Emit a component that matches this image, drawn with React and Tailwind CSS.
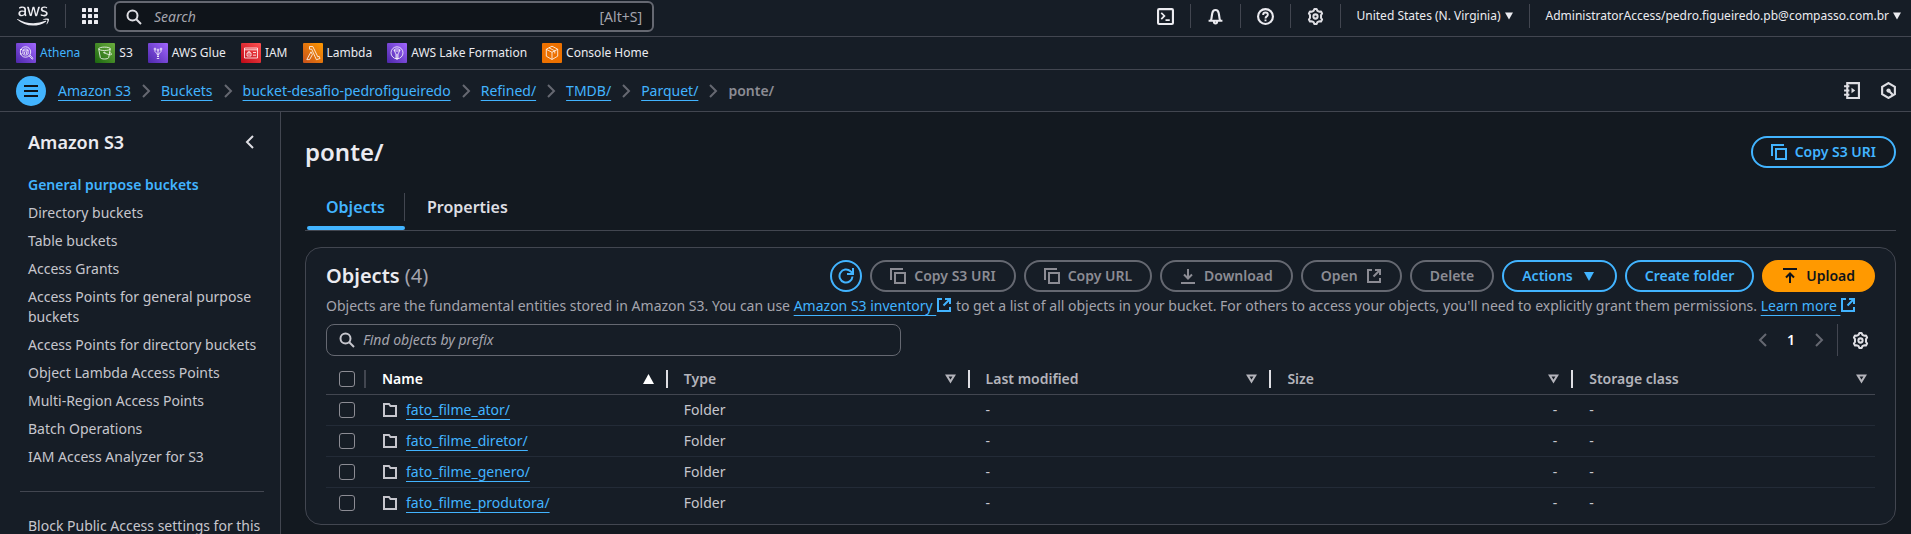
import { FaAws } from "react-icons/fa";

function Icon({ children, className = "size-4", width = 2 }) {
  return (
    <svg viewBox="0 0 16 16" className={"shrink-0 " + className} fill="none" stroke="currentColor" strokeWidth={width} aria-hidden="true">
      {children}
    </svg>
  );
}

const SearchIcon = ({ className }) => (
  <Icon className={className}>
    <circle cx="6.5" cy="6.5" r="5" />
    <path d="M10 10l5 5" />
  </Icon>
);
const GearIcon = () => (
  <Icon className="size-[17px] text-[#dedee3]" width={1.9}>
    <path
      strokeLinejoin="round"
      d="M6.2 2.6 7 1h2l.8 1.6 1.6.9 1.8-.1 1 1.8-1 1.5v2.6l1 1.5-1 1.8-1.8-.1-1.6.9L9 15H7l-.8-1.6-1.6-.9-1.8.1-1-1.8 1-1.5V6.7l-1-1.5 1-1.8 1.8.1z"
    />
    <circle cx="8" cy="8" r="2" />
  </Icon>
);
const CopyIcon = () => (
  <Icon>
    <path d="M5 5h10v10H5z" />
    <path d="M1 12V1h12" />
  </Icon>
);
const ExternalIcon = ({ className }) => (
  <Icon className={className}>
    <path d="M6 2H2v12h12v-4" />
    <path d="M9 2h5v5M14 2L7.500 8.500" />
  </Icon>
);
const ChevronRight = ({ className = "size-4 text-[#656871]" }) => (
  <Icon className={className}>
    <path d="M5 2l6 6-6 6" />
  </Icon>
);
const ChevronLeft = ({ className }) => (
  <Icon className={className}>
    <path d="M11 2L5 8l6 6" />
  </Icon>
);
const CaretDown = ({ className }) => (
  <svg viewBox="0 0 10 9" className={"shrink-0 " + className} fill="currentColor" aria-hidden="true">
    <path d="M0 0h10L5 9z" />
  </svg>
);

function ServiceIcon({ id, from, to, children }) {
  return (
    <svg viewBox="0 0 20 20" className="size-5 shrink-0" aria-hidden="true">
      <defs>
        <linearGradient id={id} x1="0" y1="1" x2="1" y2="0">
          <stop offset="0" stopColor={from} />
          <stop offset="1" stopColor={to} />
        </linearGradient>
      </defs>
      <rect width="20" height="20" rx="1" fill={"url(#" + id + ")"} />
      <g fill="none" stroke="#fff" strokeWidth="0.8">
        {children}
      </g>
    </svg>
  );
}

const services = [
  {
    name: "Athena",
    active: true,
    from: "#4d27aa",
    to: "#a166ff",
    art: (
      <>
        <circle cx="9.5" cy="9" r="5.2" />
        <ellipse cx="9.5" cy="7" rx="2.6" ry="1" />
        <path d="M6.9 7v4c0 1.4 5.2 1.4 5.2 0V7M8.6 9v2M10.6 8.6v2.6M4 6.5h2M4 11h2M13 12.8l3.2 3.4.8-.8-3-3.4" />
      </>
    ),
  },
  {
    name: "S3",
    from: "#1b660f",
    to: "#6cae3e",
    art: (
      <>
        <ellipse cx="9.5" cy="5.8" rx="5.8" ry="1.7" />
        <path d="M3.7 5.800l1.600 8.700c.2 2 8.200 2 8.400 0l1.600-8.700M9.500 9.800c2 1.200 6.500 2.800 7 1.600.3-.8-1-1.600-2-2.100" />
        <circle cx="9.3" cy="9.6" r=".6" />
      </>
    ),
  },
  {
    name: "AWS Glue",
    from: "#4d27aa",
    to: "#a166ff",
    art: (
      <>
        <path d="M10 8v6M7 7v1.500L9.300 11v1M13 7v1.500L10.700 11v1M8.800 15.500h2.400M9 13.500h2" />
        <circle cx="7" cy="6" r=".9" />
        <circle cx="13" cy="6" r=".9" />
        <circle cx="10" cy="7" r=".9" />
      </>
    ),
  },
  {
    name: "IAM",
    from: "#bd0816",
    to: "#ff5252",
    art: (
      <>
        <path d="M3.5 5h13v10h-13zM3.5 6.800h13M6 10h4v3H6zM7 10V8.800h2V10M12 9.500h3M12 12.200h3" />
        <path d="M8 11v1" />
      </>
    ),
  },
  {
    name: "Lambda",
    from: "#c8511b",
    to: "#ff9900",
    art: <path d="M6.500 3.500h3.300l5 10.300 1.400-.5.8 2.200-3.600 1.200L8.700 6.200H6.500zM8 8.800l1.400 2.800-2.800 5H3.800z" />,
  },
  {
    name: "AWS Lake Formation",
    from: "#4d27aa",
    to: "#a166ff",
    art: (
      <>
        <circle cx="10" cy="9.800" r="6" />
        <path d="M7 7.200C7 5.500 13 5.500 13 7.200L11 11v5H9v-5zM7 7.200c1.500 1.200 4.500 1.200 6 0M10 11v5" />
      </>
    ),
  },
  {
    name: "Console Home",
    from: "#ed7100",
    to: "#ed7100",
    art: <path d="M10 3.200l5.700 3v7L10 16.500l-5.700-3.300v-7zM4.300 6.300L10 9.300l5.700-3M10 9.300v7M7 4.800l5.800 3.100v2.600" />,
  },
];

const crumbs = ["Amazon S3", "Buckets", "bucket-desafio-pedrofigueiredo", "Refined/", "TMDB/", "Parquet/"];

const navItems = [
  "General purpose buckets",
  "Directory buckets",
  "Table buckets",
  "Access Grants",
  "Access Points for general purpose buckets",
  "Access Points for directory buckets",
  "Object Lambda Access Points",
  "Multi-Region Access Points",
  "Batch Operations",
  "IAM Access Analyzer for S3",
];

const folders = ["fato_filme_ator/", "fato_filme_diretor/", "fato_filme_genero/", "fato_filme_produtora/"];
const columns = ["Name", "Type", "Last modified", "Size", "Storage class"];

const linkClass = "text-[#42b4ff] underline decoration-1 underline-offset-4";
const checkClass =
  "block size-4 appearance-none rounded-[3px] border border-[#8c8c94] bg-transparent checked:bg-[#42b4ff]";

function Button({ kind = "normal", children }) {
  const kinds = {
    normal: "border-[#42b4ff] text-[#42b4ff]",
    disabled: "border-[#656871] text-[#8c8c94]",
    primary: "border-[#ff9900] bg-[#ff9900] text-[#0f141a]",
  };
  return (
    <button
      type="button"
      disabled={kind === "disabled"}
      className={"flex h-8 items-center gap-2 rounded-full border-2 px-[18px] text-sm font-semibold whitespace-nowrap " + kinds[kind]}
    >
      {children}
    </button>
  );
}

function Divider({ className = "h-6" }) {
  return <span className={"w-px shrink-0 bg-[#424650] " + className} />;
}

function TopBar() {
  return (
    <header className="flex h-[37px] items-start border-b border-[#424650] pr-[10px] pl-[17px] text-xs text-[#ebebf0]">
      <div className="flex h-8 items-center gap-4">
        <a href="#home" aria-label="AWS home" className="flex w-8 justify-center">
          <FaAws className="h-[26px] w-8" />
        </a>
        <Divider />
        <button type="button" aria-label="Services">
          <svg viewBox="0 0 16 16" className="size-4" fill="currentColor" aria-hidden="true">
            {[0, 6, 12].map((y) => [0, 6, 12].map((x) => <rect key={x + "-" + y} x={x} y={y} width="4" height="4" rx="0.5" />))}
          </svg>
        </button>
        <label className="mt-px flex h-[31px] w-[540px] items-center gap-3 rounded-md border-2 border-[#656871] bg-[#0f141a] px-[10px] text-sm text-[#a4a4ad]">
          <SearchIcon className="size-4 text-[#dedee3]" />
          <input
            type="search"
            aria-label="Search"
            placeholder="Search"
            className="min-w-0 flex-1 bg-transparent outline-none placeholder:text-[#a4a4ad] placeholder:italic"
          />
          <span>[Alt+S]</span>
        </label>
      </div>
      <div className="ml-auto flex h-8 items-center gap-4">
        <button type="button" aria-label="CloudShell">
          <Icon className="size-[17px]">
            <rect x="1" y="1" width="14" height="14" rx="1" />
            <path d="M4 4.500L7 7.500 4 10.500M8 11.500h4" strokeWidth="1.600" />
          </Icon>
        </button>
        <Divider />
        <button type="button" aria-label="Notifications">
          <Icon className="size-[17px]">
            <path d="M1.500 12h13M3.500 12C5 10 4 4.500 6 2.700c1-1 3-1 4 0C12 4.500 11 10 12.500 12M6.500 12.500c0 2.800 3 2.800 3 0" />
          </Icon>
        </button>
        <Divider />
        <button type="button" aria-label="Help">
          <Icon className="size-[17px]">
            <circle cx="8" cy="8" r="7" />
            <path d="M5.800 6.500c0-3 4.400-2.800 4.400-.2C10.200 8 8 7.800 8 9.800M8 10.800v1.700" strokeWidth="1.800" />
          </Icon>
        </button>
        <Divider />
        <button type="button" aria-label="Settings">
          <GearIcon />
        </button>
        <Divider />
        <button type="button" className="flex items-center gap-1 whitespace-nowrap">
          United States (N. Virginia)
          <CaretDown className="h-2 w-2" />
        </button>
        <Divider />
        <button type="button" className="flex items-center gap-1 whitespace-nowrap">
          AdministratorAccess/pedro.figueiredo.pb@compasso.com.br
          <CaretDown className="h-2 w-2" />
        </button>
      </div>
    </header>
  );
}

function FavoritesBar() {
  return (
    <nav aria-label="Favorites" className="flex h-[33px] items-center gap-[15px] border-b border-[#424650] px-4 text-xs text-[#ebebf0]">
      {services.map((s) => (
        <a key={s.name} href="#service" className={"flex items-center gap-1 whitespace-nowrap " + (s.active ? "text-[#42b4ff]" : "")}>
          <ServiceIcon id={"g-" + s.name.replaceAll(" ", "")} from={s.from} to={s.to}>
            {s.art}
          </ServiceIcon>
          {s.name}
        </a>
      ))}
    </nav>
  );
}

function BreadcrumbBar() {
  return (
    <div className="flex h-[42px] items-center justify-between border-b border-[#424650] pr-[14px] pl-4">
      <div className="flex items-center gap-3">
        <button type="button" aria-label="Open navigation" className="flex size-[30px] items-center justify-center rounded-full bg-[#42b4ff] text-[#0f141a]">
          <Icon>
            <path d="M1 3h14M1 8h14M1 13h14" />
          </Icon>
        </button>
        <nav aria-label="Breadcrumb" className="flex items-center gap-[7px] text-sm">
          {crumbs.map((c) => (
            <span key={c} className="flex items-center gap-[7px]">
              <a href="#crumb" className={linkClass}>
                {c}
              </a>
              <ChevronRight />
            </span>
          ))}
          <span className="font-semibold text-[#8c8c94]">ponte/</span>
        </nav>
      </div>
      <div className="flex gap-5 text-[#dedee3]">
        <button type="button" aria-label="Tutorials">
          <Icon className="size-[17px]">
            <path d="M4 1h11v14H4zM1 4h5M1 8h5M1 12h5" />
            <path d="M8 5.500v5L11.500 8z" fill="currentColor" stroke="none" />
          </Icon>
        </button>
        <button type="button" aria-label="Diagnostics">
          <Icon className="size-[17px]">
            <path d="M8 1l6 3.500v7L8 15l-6-3.500v-7z" />
            <path d="M8 8l4 4" />
            <circle cx="8" cy="8" r="2" fill="currentColor" stroke="none" />
          </Icon>
        </button>
      </div>
    </div>
  );
}

function Sidebar() {
  return (
    <aside className="w-[281px] shrink-0 border-r border-[#424650]">
      <div className="flex items-center justify-between pt-4 pr-[22px] pl-7">
        <h2 className="text-lg leading-7 font-semibold text-[#ebebf0]">Amazon S3</h2>
        <button type="button" aria-label="Close navigation" className="text-[#dedee3]">
          <ChevronLeft className="size-4" />
        </button>
      </div>
      <ul className="mt-[19px] flex flex-col gap-2 pr-3 pl-7 text-sm leading-5 text-[#c6c6cd]">
        {navItems.map((n, i) => (
          <li key={n}>
            <a href="#nav" className={i === 0 ? "font-semibold text-[#42b4ff]" : ""}>
              {n}
            </a>
          </li>
        ))}
      </ul>
      <hr className="mt-6 mr-4 ml-5 border-[#424650]" />
      <p className="mt-6 pr-3 pl-7 text-sm leading-5 text-[#c6c6cd]">
        <a href="#block-public-access">Block Public Access settings for this account</a>
      </p>
    </aside>
  );
}

function SortIcon({ sorted }) {
  return sorted ? (
    <svg viewBox="0 0 11 10" className="h-[10px] w-[11px] shrink-0" fill="currentColor" aria-hidden="true">
      <path d="M0 10h11L5.500 0z" />
    </svg>
  ) : (
    <svg viewBox="0 0 11 10" className="h-[10px] w-[11px] shrink-0" fill="none" stroke="currentColor" strokeWidth="2" aria-hidden="true">
      <path d="M1.800 1.500h7.400L5.500 7.500z" />
    </svg>
  );
}

function ObjectsTable() {
  return (
    <table className="w-full table-fixed border-collapse text-left text-sm leading-5 text-[#c6c6cd]">
      <thead>
        <tr className="h-[38px] border-b border-[#424650]">
          <th className="w-10 p-0">
            <div className="flex items-center justify-between pt-2 pl-[13px]">
              <input type="checkbox" aria-label="Select all objects" className={checkClass} />
              <span className="h-[18px] w-0.5 bg-[#424650]" />
            </div>
          </th>
          {columns.map((c, i) => (
            <th key={c} className={"p-0 font-semibold " + (i === 0 ? "text-white" : "text-[#b4b4bb]")}>
              <div className={"flex items-center gap-3 pt-2 pl-4 " + (i === 4 ? "pr-2" : "")}>
                <span className="flex-1">{c}</span>
                <SortIcon sorted={i === 0} />
                {i < 4 && <span className="h-[18px] w-0.5 bg-[#dedee3]" />}
              </div>
            </th>
          ))}
        </tr>
      </thead>
      <tbody>
        {folders.map((f) => (
          <tr key={f} className="h-[31px] border-b border-[#232b37] last:border-0">
            <td className="p-0 pl-[13px]">
              <input type="checkbox" aria-label={"Select " + f} className={checkClass} />
            </td>
            <td className="p-0 pl-4">
              <div className="flex items-center gap-2">
                <Icon>
                  <path d="M2 2h5l1.500 2H14v10H2z" />
                </Icon>
                <a href="#folder" className={linkClass}>
                  {f}
                </a>
              </div>
            </td>
            <td className="p-0 pl-4">Folder</td>
            <td className="p-0 pl-4">-</td>
            <td className="p-0 pr-4 text-right">-</td>
            <td className="p-0 pl-4">-</td>
          </tr>
        ))}
      </tbody>
    </table>
  );
}

function ObjectsPanel() {
  return (
    <section className="mt-4 rounded-2xl border border-[#424650] bg-[#161d26] px-5 pt-3 pb-[6px]">
      <div className="flex items-center justify-between">
        <h2 className="text-xl leading-7 font-semibold text-[#ebebf0]">
          Objects <span className="font-normal text-[#a4a4ad]">(4)</span>
        </h2>
        <div className="flex gap-2">
          <button type="button" aria-label="Refresh" className="flex size-8 items-center justify-center rounded-full border-2 border-[#42b4ff] text-[#42b4ff]">
            <Icon>
              <path d="M14.500 8.500A6.500 6.500 0 1 1 12.500 3.300L14.500 5" />
              <path d="M15 0v6H9" />
            </Icon>
          </button>
          <Button kind="disabled">
            <CopyIcon />
            Copy S3 URI
          </Button>
          <Button kind="disabled">
            <CopyIcon />
            Copy URL
          </Button>
          <Button kind="disabled">
            <Icon>
              <path d="M8 1v9M4 6.500l4 4 4-4M1 15h14" />
            </Icon>
            Download
          </Button>
          <Button kind="disabled">
            Open
            <ExternalIcon />
          </Button>
          <Button kind="disabled">Delete</Button>
          <Button>
            Actions
            <CaretDown className="mx-[3px] h-[9px] w-[10px]" />
          </Button>
          <Button>Create folder</Button>
          <Button kind="primary">
            <Icon>
              <path d="M8 15V6M4 9.500l4-4 4 4M1 1h14" />
            </Icon>
            Upload
          </Button>
        </div>
      </div>
      <p className="mt-1 text-sm leading-5 text-[#a4a4ad]">
        Objects are the fundamental entities stored in Amazon S3. You can use{" "}
        <a href="#inventory" className={linkClass}>
          Amazon S3 inventory <ExternalIcon className="inline size-4 align-[-2px]" />
        </a>{" "}
        to get a list of all objects in your bucket. For others to access your objects, you'll need to explicitly grant them permissions.{" "}
        <a href="#learn" className={linkClass}>
          Learn more <ExternalIcon className="inline size-4 align-[-2px]" />
        </a>
      </p>
      <div className="mt-2 flex items-center justify-between">
        <label className="flex h-8 w-[575px] items-center gap-2 rounded-lg border border-[#656871] px-3 text-sm">
          <SearchIcon className="size-4 text-[#c6c6cd]" />
          <input
            type="search"
            aria-label="Find objects by prefix"
            placeholder="Find objects by prefix"
            className="min-w-0 flex-1 bg-transparent outline-none placeholder:text-[#a4a4ad] placeholder:italic"
          />
        </label>
        <div className="flex items-center pr-[6px] text-sm">
          <button type="button" disabled aria-label="Previous page" className="text-[#656871]">
            <ChevronLeft className="size-4" />
          </button>
          <button type="button" className="w-10 font-semibold text-white">
            1
          </button>
          <button type="button" disabled aria-label="Next page" className="mr-[10px]">
            <ChevronRight />
          </button>
          <Divider className="h-8" />
          <button type="button" aria-label="Preferences" className="ml-[14px]">
            <GearIcon />
          </button>
        </div>
      </div>
      <ObjectsTable />
    </section>
  );
}

export default function App() {
  return (
    <div className="flex h-screen flex-col overflow-hidden bg-[#161d26] font-['Noto_Sans','Open_Sans',sans-serif]">
      <TopBar />
      <FavoritesBar />
      <BreadcrumbBar />
      <div className="flex min-h-0 flex-1">
        <Sidebar />
        <main className="min-w-0 flex-1 bg-[#131920] pt-6 pr-[15px] pl-6">
          <div className="flex items-center justify-between">
            <h1 className="text-2xl font-semibold text-[#ebebf0]">ponte/</h1>
            <Button>
              <CopyIcon />
              Copy S3 URI
            </Button>
          </div>
          <div role="tablist" className="mt-4 flex h-[47px] border-b border-[#424650] pl-0.5 text-base font-semibold">
            <button type="button" role="tab" aria-selected="true" className="flex flex-col text-[#42b4ff]">
              <span className="mt-[9px] flex h-7 items-center border-r border-[#424650] px-[19px]">Objects</span>
              <span className="mt-auto h-1 w-full rounded-sm bg-[#42b4ff]" />
            </button>
            <button type="button" role="tab" aria-selected="false" className="flex flex-col text-[#dedee3]">
              <span className="mt-[9px] flex h-7 items-center px-[22px]">Properties</span>
            </button>
          </div>
          <ObjectsPanel />
        </main>
      </div>
    </div>
  );
}
